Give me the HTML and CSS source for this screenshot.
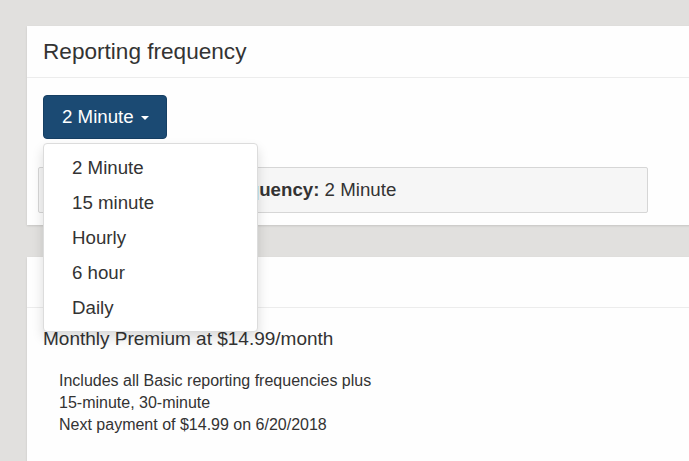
FILE: index.html
```html
<!DOCTYPE html>
<html lang="en">
<head>
<meta charset="utf-8">
<title>Reporting frequency</title>
<link rel="stylesheet" href="styles.css">
</head>
<body>
<div class="page">
  <section class="card card-top">
    <header class="card-header">Reporting frequency</header>
    <div class="card-body">
      <div class="dropdown">
        <button class="btn-primary" type="button">2 Minute <span class="caret"></span></button>
        <ul class="dropdown-menu">
          <li>2 Minute</li>
          <li>15 minute</li>
          <li>Hourly</li>
          <li>6 hour</li>
          <li>Daily</li>
        </ul>
      </div>
      <div class="well"><strong>Current reporting frequency:</strong> 2 Minute</div>
    </div>
  </section>

  <section class="card card-bottom">
    <header class="card-header">Subscription</header>
    <div class="card-body plan">
      <div class="plan-title">Monthly Premium at $14.99/month</div>
      <div class="plan-details">
        <div>Includes all Basic reporting frequencies plus</div>
        <div>15-minute, 30-minute</div>
        <div>Next payment of $14.99 on 6/20/2018</div>
      </div>
    </div>
  </section>
</div>
</body>
</html>
```
FILE: styles.css
```css
html, body {
  margin: 0;
  padding: 0;
}
body {
  background: #e1e0de;
  font-family: "Liberation Sans", Arial, sans-serif;
  color: #333;
  overflow: hidden;
  height: 461px;
}
.page {
  padding: 26px 0 0 27px;
  display: flex;
  flex-direction: column;
  gap: 32px;
}
.card {
  background: #fefefe;
  margin-right: -40px;
  box-shadow: 0 1px 2px rgba(0, 0, 0, 0.12);
}
.card-header {
  height: 51px;
  box-sizing: border-box;
  border-bottom: 1px solid #ececec;
  padding: 0 16px;
  display: flex;
  align-items: center;
  font-size: 22.6px;
  color: #333;
}
.card-top .card-header {
  height: 52px;
}
.card-top .card-body {
  padding: 17px 16px 12px 16px;
}
.dropdown {
  position: relative;
  width: max-content;
}
.btn-primary {
  height: 44px;
  box-sizing: border-box;
  padding: 0 17px 0 18px;
  background: #1b4a73;
  color: #fff;
  border: 1px solid #163f63;
  border-radius: 4px;
  font-family: inherit;
  font-size: 18.7px;
  display: flex;
  align-items: center;
  gap: 7px;
}
.caret {
  width: 0;
  height: 0;
  border-top: 4.5px solid #fff;
  border-left: 4.5px solid transparent;
  border-right: 4.5px solid transparent;
  margin-top: 1px;
}
.dropdown-menu {
  position: absolute;
  top: 48px;
  left: 0;
  z-index: 10;
  width: 215px;
  box-sizing: border-box;
  margin: 0;
  padding: 6px 0;
  list-style: none;
  background: #fff;
  border: 1px solid #dcdcdc;
  border-radius: 4px;
  box-shadow: 0 6px 12px rgba(0, 0, 0, 0.14);
}
.dropdown-menu li {
  height: 35px;
  line-height: 35px;
  padding-left: 28px;
  font-size: 18.7px;
  color: #333;
}
.well {
  margin: 28px 0 0 -5px;
  width: 610px;
  height: 46px;
  box-sizing: border-box;
  padding: 0 25px;
  display: flex;
  align-items: center;
  white-space: pre;
  background: #f6f6f6;
  border: 1px solid #d6d6d6;
  border-radius: 2px;
  font-size: 18.7px;
}
.well strong {
  font-weight: bold;
}
.card-bottom {
  height: 260px;
}
.plan {
  padding: 20px 16px 0 16px;
}
.plan-title {
  font-size: 19px;
  line-height: 22px;
}
.plan-details {
  margin: 20px 0 0 16px;
  font-size: 16px;
  line-height: 22px;
}
```
